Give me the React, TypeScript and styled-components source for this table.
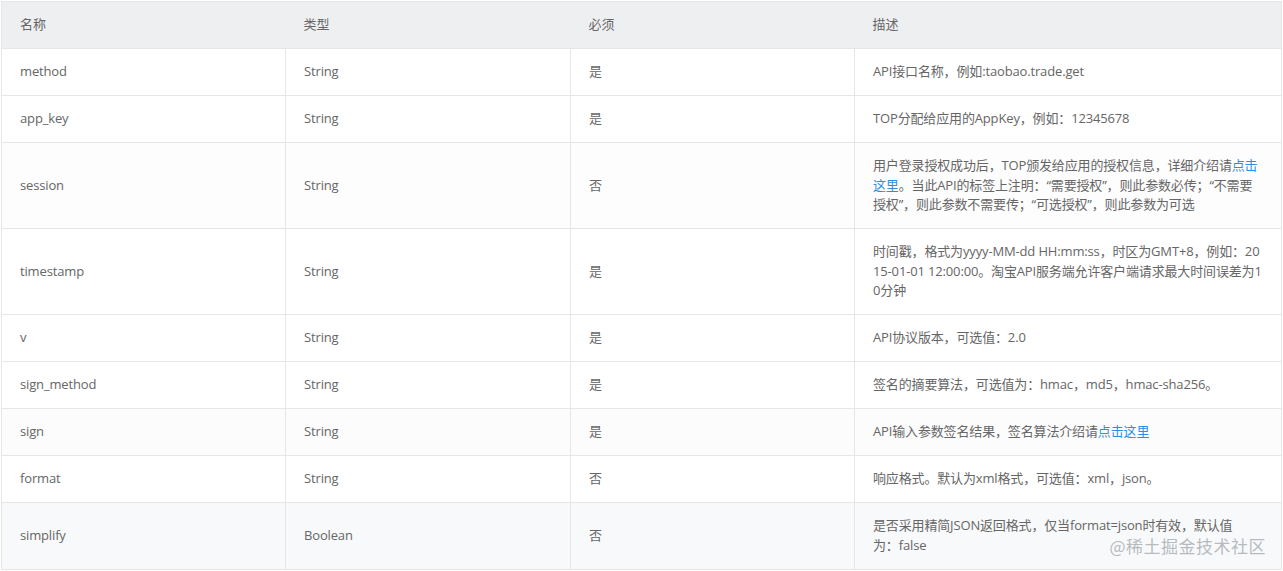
import React from "react";
import styled, { createGlobalStyle } from "styled-components";

const Global = createGlobalStyle`
  html, body { margin: 0; padding: 0; background: #ffffff; }
  body { padding: 1px 0 0 1px; }
`;

const Wrap = styled.div`
  position: relative;
  width: 1281px;
`;

const Table = styled.table`
  width: 1281px;
  table-layout: fixed;
  border-collapse: collapse;
  font-family: "Open Sans", "Noto Sans CJK SC", sans-serif;
  font-size: 13px;
  color: #666666;
  border: 1px solid #e6e6e6;
`;

const Th = styled.th`
  background: #eeeff1;
  font-weight: 400;
  text-align: left;
  padding: 13.25px 18px;
  line-height: 19.5px;
  color: #666666;
  border-bottom: 1px solid #e6e6e6;
`;

const Tr = styled.tr<{ $shade?: string }>`
  background: ${(p) => p.$shade ?? "#ffffff"};
`;

const Td = styled.td`
  padding: 13.25px 18px;
  line-height: 19.5px;
  vertical-align: middle;
  border: 1px solid #e6e6e6;
  word-break: break-all;
  letter-spacing: -0.15px;
`;

const Link = styled.a`
  color: #2f8de4;
  text-decoration: none;
`;

const Watermark = styled.div`
  position: absolute;
  right: 16px;
  bottom: 12px;
  font-family: "Noto Sans CJK SC", sans-serif;
  font-size: 17px;
  line-height: 24px;
  color: rgba(160, 165, 172, 0.75);
  letter-spacing: 0.5px;
`;

type Row = {
  name: string;
  type: string;
  req: string;
  desc: React.ReactNode;
  shade?: string;
};

const rows: Row[] = [
  { name: "method", type: "String", req: "是", desc: "API接口名称，例如:taobao.trade.get" },
  { name: "app_key", type: "String", req: "是", desc: "TOP分配给应用的AppKey，例如：12345678" },
  {
    name: "session",
    type: "String",
    req: "否",
    shade: "#fdfdfd",
    desc: (
      <>
        用户登录授权成功后，TOP颁发给应用的授权信息，详细介绍请<Link>点击这里</Link>。当此API的标签上注明：“需要授权”，则此参数必传；“不需要授权”，则此参数不需要传；“可选授权”，则此参数为可选
      </>
    ),
  },
  {
    name: "timestamp",
    type: "String",
    req: "是",
    desc: "时间戳，格式为yyyy-MM-dd HH:mm:ss，时区为GMT+8，例如：2015-01-01 12:00:00。淘宝API服务端允许客户端请求最大时间误差为10分钟",
  },
  { name: "v", type: "String", req: "是", desc: "API协议版本，可选值：2.0" },
  { name: "sign_method", type: "String", req: "是", desc: "签名的摘要算法，可选值为：hmac，md5，hmac-sha256。" },
  {
    name: "sign",
    type: "String",
    req: "是",
    shade: "#fcfcfd",
    desc: (
      <>
        API输入参数签名结果，签名算法介绍请<Link>点击这里</Link>
      </>
    ),
  },
  { name: "format", type: "String", req: "否", desc: "响应格式。默认为xml格式，可选值：xml，json。" },
  {
    name: "simplify",
    type: "Boolean",
    req: "否",
    shade: "#f8f9fa",
    desc: (
      <>
        是否采用精简JSON返回格式，仅当format=json时有效，默认值
        <br />
        为：false
      </>
    ),
  },
];

export default function App() {
  return (
    <>
      <Global />
      <Wrap>
        <Table>
          <colgroup>
            <col style={{ width: 284 }} />
            <col style={{ width: 285 }} />
            <col style={{ width: 284 }} />
            <col />
          </colgroup>
          <thead>
            <tr>
              <Th>名称</Th>
              <Th>类型</Th>
              <Th>必须</Th>
              <Th>描述</Th>
            </tr>
          </thead>
          <tbody>
            {rows.map((r) => (
              <Tr key={r.name} $shade={r.shade}>
                <Td>{r.name}</Td>
                <Td>{r.type}</Td>
                <Td>{r.req}</Td>
                <Td>{r.desc}</Td>
              </Tr>
            ))}
          </tbody>
        </Table>
        <Watermark>@稀土掘金技术社区</Watermark>
      </Wrap>
    </>
  );
}
